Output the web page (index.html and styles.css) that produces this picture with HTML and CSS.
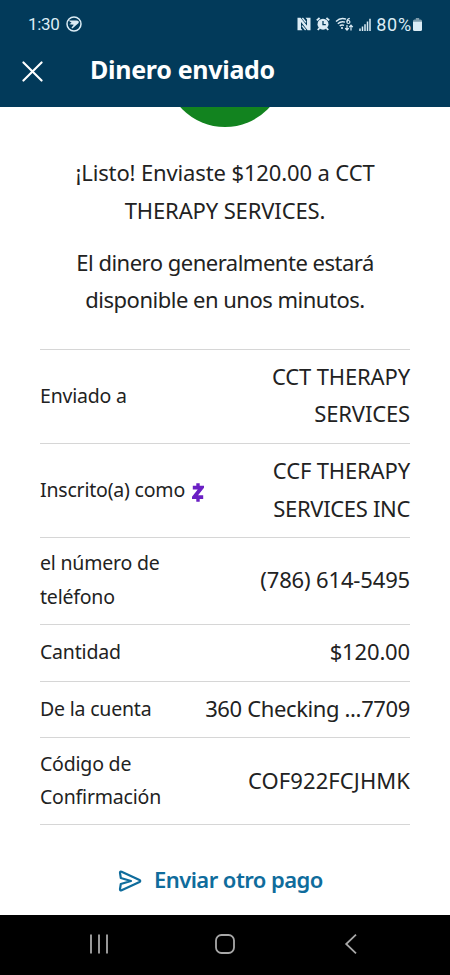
FILE: index.html
```html
<!DOCTYPE html>
<html lang="es">
<head>
    <meta charset="UTF-8">
    <meta name="viewport" content="width=device-width, initial-scale=1.0">
    <title>Dinero enviado</title>
    <link rel="stylesheet" href="styles.css">
</head>
<body>

    <header>
        <div class="estado">
            <span class="hora">1:30</span>
            <svg class="app" width="16" height="16" viewBox="0 0 16 16">
                <circle cx="8" cy="8" r="7" fill="none" stroke="currentColor" stroke-width="1.5"/>
                <path d="M2.4 4.6L10.5 4.4Q13.6 4.4 12.6 7L6.4 12.6L5.4 11.8L7.8 8.8L3.2 8.2L5.6 6.8Z" fill="currentColor"/>
            </svg>
            <div class="iconos">
                <svg width="14" height="14" viewBox="0 0 14 14">
                    <path d="M0.5 0.8H3.6L10 8.8V2.5L8.5 0.8H13.5V13.2H10.6L4 5V11.5L5.5 13.2H0.5Z" fill="currentColor"/>
                    <path d="M5.4 1L9 5.4M5 8.6L8.6 13" stroke="currentColor" stroke-width="1.4"/>
                </svg>
                <svg width="14" height="14" viewBox="0 0 14 14">
                    <circle cx="7" cy="7.2" r="5.5" fill="currentColor"/>
                    <path d="M0.8 3.4L3.6 1M10.4 1L13.2 3.4M3.5 11L1.8 13M10.5 11L12.2 13" stroke="currentColor" stroke-width="1.9"/>
                    <path d="M7 4V7.7H9.8" fill="none" stroke="#023a5a" stroke-width="1.3"/>
                </svg>
                <svg width="19" height="15" viewBox="0 0 19 15">
                    <path d="M1 4.5Q5.5 0 11 2.2M2.8 6.8Q6 3.8 10 5.2M4.7 9Q6.7 7.2 9 8.4" fill="none" stroke="currentColor" stroke-width="1.4"/>
                    <circle cx="7" cy="11" r="1.1" fill="currentColor"/>
                    <path d="M14.8 1.4Q12 1.8 12 4.7" fill="none" stroke="currentColor" stroke-width="1.2"/>
                    <circle cx="13.4" cy="5" r="1.5" fill="none" stroke="currentColor" stroke-width="1.2"/>
                    <path d="M12 8V13M10.2 11.2L12 13.2L13.8 11.2M16 13.5V8.5M14.2 10.2L16 8.2L17.8 10.2" fill="none" stroke="currentColor" stroke-width="1.2"/>
                </svg>
                <svg width="12" height="13" viewBox="0 0 12 13">
                    <path d="M1 13V10.5M3.5 13V8.5M6 13V6.2M8.5 13V3.5M11 13V0.8" stroke="currentColor" stroke-width="1.5"/>
                </svg>
            </div>
            <span class="porcentaje">80%</span>
            <svg class="bateria" width="9" height="13" viewBox="0 0 9 13">
                <path d="M2.8 0H6.2V1.5H7.5Q9 1.5 9 3V4H0V3Q0 1.5 1.5 1.5H2.8Z" fill="#7f9cac"/>
                <path d="M0 3.8H9V11.5Q9 13 7.5 13H1.5Q0 13 0 11.5Z" fill="currentColor"/>
            </svg>
        </div>
        <div class="barra">
            <svg class="cerrar" width="21" height="21" viewBox="0 0 22 22">
                <path d="M1.5 1.5L20.5 20.5M20.5 1.5L1.5 20.5" stroke="currentColor" stroke-width="2.2" stroke-linecap="round"/>
            </svg>
            <h1>Dinero enviado</h1>
        </div>
    </header>

    <main>
        <div class="circulo"></div>

        <div class="mensaje">
            <p>¡Listo! Enviaste $120.00 a CCT<br>THERAPY SERVICES.</p>
            <p class="junto">El dinero generalmente estará<br>disponible en unos minutos.</p>
        </div>

        <dl>
            <div class="fila">
                <dt>Enviado a</dt>
                <dd>CCT THERAPY<br>SERVICES</dd>
            </div>
            <div class="fila">
                <dt>Inscrito(a) como
                    <svg class="zelle" width="12" height="19" viewBox="0 0 12 19">
                        <path d="M0.8 4.7H9.6L2.2 14.1H11.2" fill="none" stroke="#6a1fc4" stroke-width="3.8"/>
                        <path d="M6 0.3V4.5M6 14V18.7" stroke="#6a1fc4" stroke-width="3.4"/>
                    </svg>
                </dt>
                <dd>CCF THERAPY<br><span class="inc">SERVICES INC</span></dd>
            </div>
            <div class="fila">
                <dt>el número de<br>teléfono</dt>
                <dd>(786) 614-5495</dd>
            </div>
            <div class="fila">
                <dt>Cantidad</dt>
                <dd>$120.00</dd>
            </div>
            <div class="fila">
                <dt>De la cuenta</dt>
                <dd class="cuenta">360 Checking ...7709</dd>
            </div>
            <div class="fila">
                <dt>Código de<br>Confirmación</dt>
                <dd class="codigo">COF922FCJHMK</dd>
            </div>
        </dl>

        <a class="otro">
            <svg width="24" height="22" viewBox="0 0 24 22">
                <path d="M2 2.8Q2 1.2 3.6 1.8L21.5 10Q23 11 21.5 12L3.6 20.2Q2 20.8 2 19.2L2.8 14L13 11L2.8 8Z" fill="none" stroke="currentColor" stroke-width="2.2" stroke-linejoin="round"/>
            </svg>
            <span>Enviar otro pago</span>
        </a>
    </main>

    <nav>
        <svg width="20" height="20" viewBox="0 0 20 20">
            <path d="M2 0.5V19.5M10 0.5V19.5M18 0.5V19.5" stroke="currentColor" stroke-width="1.8"/>
        </svg>
        <svg width="20" height="20" viewBox="0 0 20 20">
            <rect x="1" y="1" width="18" height="18" rx="5.5" fill="none" stroke="currentColor" stroke-width="1.8"/>
        </svg>
        <svg width="20" height="20" viewBox="0 0 20 20">
            <path d="M15 0.7L5.2 10L15 19.3" fill="none" stroke="currentColor" stroke-width="1.8"/>
        </svg>
    </nav>

</body>
</html>
```
FILE: styles.css
```css
* {
    box-sizing: border-box;
}

body {
    font-family: "Noto Sans", sans-serif;
    margin: 0;
    height: 975px;
    display: flex;
    flex-direction: column;
    background-color: #fff;
    color: #222;
    overflow: hidden;
}

/* Cabecera */
header {
    height: 107px;
    background-color: #023a5a;
    color: #fff;
}

.estado {
    height: 48px;
    padding: 0 28px;
    display: flex;
    align-items: center;
    font-family: Roboto, sans-serif;
    font-size: 17px;
    color: #dcecf5;
}

.hora {
    letter-spacing: -0.3px;
}

.app {
    margin-left: 6px;
}

.iconos {
    display: flex;
    align-items: center;
    gap: 5px;
    margin-left: auto;
}

.porcentaje {
    margin-left: 5px;
    font-size: 18px;
    letter-spacing: 0.8px;
}

.bateria {
    margin-left: 1px;
}

.barra {
    height: 46px;
    padding-left: 22px;
    display: flex;
    align-items: center;
}

h1 {
    margin: -4px 0 0 47px;
    font-size: 25px;
    line-height: 34px;
    font-weight: 700;
    letter-spacing: -0.3px;
    white-space: nowrap;
}

/* Contenido */
main {
    flex: 1;
}

.circulo {
    width: 92px;
    height: 20px;
    margin: 0 auto;
    overflow: hidden;
    display: flex;
    align-items: flex-end;
    justify-content: center;
}

.circulo::before {
    content: "";
    flex: none;
    width: 120px;
    height: 120px;
    border-radius: 50%;
    background-color: #12831f;
}

.mensaje {
    margin-top: 27px;
    text-align: center;
    font-size: 22px;
    line-height: 37.5px;
    letter-spacing: -0.13px;
    white-space: nowrap;
}

.mensaje p {
    margin: 0 0 14.5px;
}

.mensaje .junto {
    letter-spacing: -0.5px;
}

dl {
    margin: 30px 40px 0;
    border-top: 1px solid #d6d6d6;
}

.fila {
    display: flex;
    align-items: center;
    justify-content: space-between;
    padding: 8.4px 0 9.9px;
    border-bottom: 1px solid #d6d6d6;
    white-space: nowrap;
}

dt {
    font-size: 19.5px;
    line-height: 33.7px;
    letter-spacing: -0.2px;
}

dd {
    margin: 0;
    font-size: 22px;
    line-height: 37.5px;
    letter-spacing: -0.15px;
    text-align: right;
}

.inc {
    letter-spacing: -0.33px;
}

.cuenta {
    letter-spacing: -0.37px;
}

.codigo {
    letter-spacing: 0.08px;
}

.zelle {
    margin-left: 2px;
    vertical-align: -5px;
}

.otro {
    display: flex;
    align-items: center;
    gap: 12px;
    margin: 36px 0 0 118px;
    color: #0f6c9c;
    font-size: 22px;
    line-height: 36px;
    font-weight: 600;
    letter-spacing: -0.55px;
    white-space: nowrap;
}

.otro svg {
    margin-top: 4px;
}

/* Botones del sistema */
nav {
    height: 60px;
    padding: 0 89px 3px;
    display: flex;
    align-items: center;
    justify-content: space-between;
    background-color: #000;
    color: #a8a8a8;
}
```
